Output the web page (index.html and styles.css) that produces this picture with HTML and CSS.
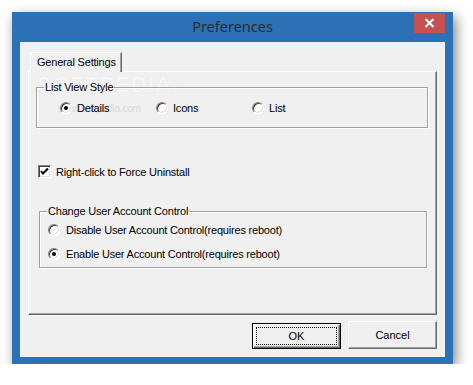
FILE: index.html
```html
<!DOCTYPE html>
<html lang="en">

<head>
    <meta charset="UTF-8">
    <meta name="viewport" content="width=device-width, initial-scale=1.0">
    <link rel="stylesheet" href="styles.css">
    <title>Preferences</title>
</head>

<body>
    <div class="window">
        <div class="titlebar">
            <span></span>
            <span class="title">Preferences</span>
            <span class="close">
                <svg width="11" height="10" viewBox="0 0 11 10">
                    <path d="M1.5 1 L9.5 9 M9.5 1 L1.5 9" stroke="#fff" stroke-width="2"/>
                </svg>
            </span>
        </div>
        <div class="client">
            <div class="tabs">
                <div class="tab">General Settings</div>
            </div>
            <div class="panel">
                <div class="mark">SOFTPEDIA<sup>™</sup></div>
                <div class="mark-url">www.softpedia.com</div>

                <fieldset class="group group-view">
                    <legend>List View Style</legend>
                    <div class="options">
                        <label class="opt"><span class="radio on"></span>Details</label>
                        <label class="opt"><span class="radio"></span>Icons</label>
                        <label class="opt"><span class="radio"></span>List</label>
                    </div>
                </fieldset>

                <label class="check-row">
                    <span class="check">
                        <svg width="9" height="9" viewBox="0 0 9 9">
                            <path d="M1 4 L3 6.5 L8 1.5" fill="none" stroke="#000" stroke-width="2"/>
                        </svg>
                    </span>
                    Right-click to Force Uninstall
                </label>

                <fieldset class="group group-uac">
                    <legend>Change User Account Control</legend>
                    <label class="opt-line"><span class="radio"></span>Disable User Account Control(requires reboot)</label>
                    <label class="opt-line"><span class="radio on"></span>Enable User Account Control(requires reboot)</label>
                </fieldset>
            </div>
            <div class="buttons">
                <button class="btn btn-default"><span class="focus">OK</span></button>
                <button class="btn">Cancel</button>
            </div>
        </div>
    </div>
</body>

</html>
```

FILE: styles.css
```css
* {
    margin: 0;
    padding: 0;
    box-sizing: border-box;
}

body {
    background-color: #ffffff;
    font-family: "Liberation Sans", Arial, sans-serif;
    font-size: 11px;
    letter-spacing: -0.2px;
    color: #000;
}

.window {
    width: 441px;
    height: 352px;
    margin: 12px 0 0 12px;
    background-color: #2b71b5;
    padding-bottom: 7px;
    display: flex;
    flex-direction: column;
    box-shadow: 3px 5px 12px rgba(0, 0, 0, 0.5);
}

.titlebar {
    height: 30px;
    padding: 1px 7px 0;
    display: grid;
    grid-template-columns: 1fr auto 1fr;
    align-items: start;
}

.title {
    font-family: "Noto Sans", "Open Sans", sans-serif;
    font-size: 14.5px;
    letter-spacing: 0;
    color: #2b2b2b;
    line-height: 27px;
}

.close {
    justify-self: end;
    width: 31px;
    height: 20px;
    margin-right: 1px;
    background-color: #c75050;
    display: flex;
    align-items: center;
    justify-content: center;
}

.client {
    flex: 1;
    margin: 0 8px;
    background-color: #f0f0f0;
    padding: 10px 8px 8px;
    display: flex;
    flex-direction: column;
}

.tabs {
    display: flex;
    padding-left: 2px;
    margin-bottom: -1px;
    position: relative;
    z-index: 1;
}

.tab {
    width: 92px;
    height: 20px;
    line-height: 19px;
    padding-left: 6px;
    background-color: #f0f0f0;
    border-top: 1px solid #fff;
    border-left: 1px solid #fff;
    border-right: 1px solid #696969;
    box-shadow: inset -1px 0 0 #a0a0a0;
}

.panel {
    height: 244px;
    position: relative;
    border-top: 1px solid #fff;
    border-left: 1px solid #fff;
    border-right: 1px solid #696969;
    border-bottom: 1px solid #696969;
    box-shadow: inset -1px -1px 0 #a0a0a0;
    padding: 9px 8px 0 7px;
}

.mark {
    position: absolute;
    left: 8px;
    top: 0;
    font-size: 22px;
    font-weight: bold;
    letter-spacing: 1px;
    color: #f5f5f5;
    text-shadow: 0 0 1px #dcdcdc;
}

.mark sup {
    font-size: 8px;
    font-weight: normal;
}

.mark-url {
    position: absolute;
    left: 29px;
    top: 31px;
    font-size: 10px;
    color: #dadada;
}

.group {
    border: 1px solid #a0a0a0;
    box-shadow: 1px 1px 0 #fff, inset 1px 1px 0 #fff;
    position: relative;
    z-index: 1;
}

.group legend {
    margin-left: 7px;
    padding: 0 1px;
    line-height: 13px;
}

.group-view {
    width: 392px;
    height: 47px;
}

.options {
    display: flex;
    padding: 8px 0 0 23px;
}

.opt {
    width: 96px;
    display: flex;
    align-items: center;
    gap: 5px;
}

.radio {
    width: 12px;
    height: 12px;
    border-radius: 50%;
    background-color: #fff;
    border-top: 1px solid #808080;
    border-left: 1px solid #808080;
    border-bottom: 1px solid #fff;
    border-right: 1px solid #fff;
    box-shadow: inset 1px 1px 0 #404040, inset -1px -1px 0 #e3e3e3;
    display: flex;
    align-items: center;
    justify-content: center;
}

.radio.on::after {
    content: "";
    width: 4px;
    height: 4px;
    border-radius: 50%;
    background-color: #000;
}

.check-row {
    display: flex;
    align-items: center;
    gap: 5px;
    margin: 37px 0 0 2px;
}

.check {
    width: 13px;
    height: 13px;
    background-color: #fff;
    border-top: 1px solid #808080;
    border-left: 1px solid #808080;
    border-bottom: 1px solid #fff;
    border-right: 1px solid #fff;
    box-shadow: inset 1px 1px 0 #404040, inset -1px -1px 0 #e3e3e3;
    display: flex;
    align-items: center;
    justify-content: center;
}

.group-uac {
    width: 388px;
    height: 63px;
    margin: 27px 0 0 3px;
    padding: 0 0 0 8px;
}

.group-uac legend {
    margin-left: -1px;
}

.opt-line {
    display: flex;
    align-items: center;
    gap: 6px;
    height: 24px;
}

.buttons {
    margin-top: auto;
    display: flex;
    justify-content: flex-end;
    align-items: flex-end;
    gap: 7px;
}

.btn {
    width: 89px;
    height: 28px;
    font-family: "Liberation Sans", Arial, sans-serif;
    font-size: 11px;
    color: #000;
    background-color: #f0f0f0;
    border-top: 1px solid #fff;
    border-left: 1px solid #fff;
    border-right: 1px solid #696969;
    border-bottom: 1px solid #696969;
    box-shadow: inset -1px -1px 0 #a0a0a0;
}

.btn-default {
    height: 26px;
    border: 1px solid #000;
    box-shadow: inset 1px 1px 0 #fff, inset -1px -1px 0 #696969, inset -2px -2px 0 #a0a0a0;
    padding: 3px;
    display: flex;
}

.focus {
    flex: 1;
    border: 1px dotted #000;
    display: flex;
    align-items: center;
    justify-content: center;
}
```
